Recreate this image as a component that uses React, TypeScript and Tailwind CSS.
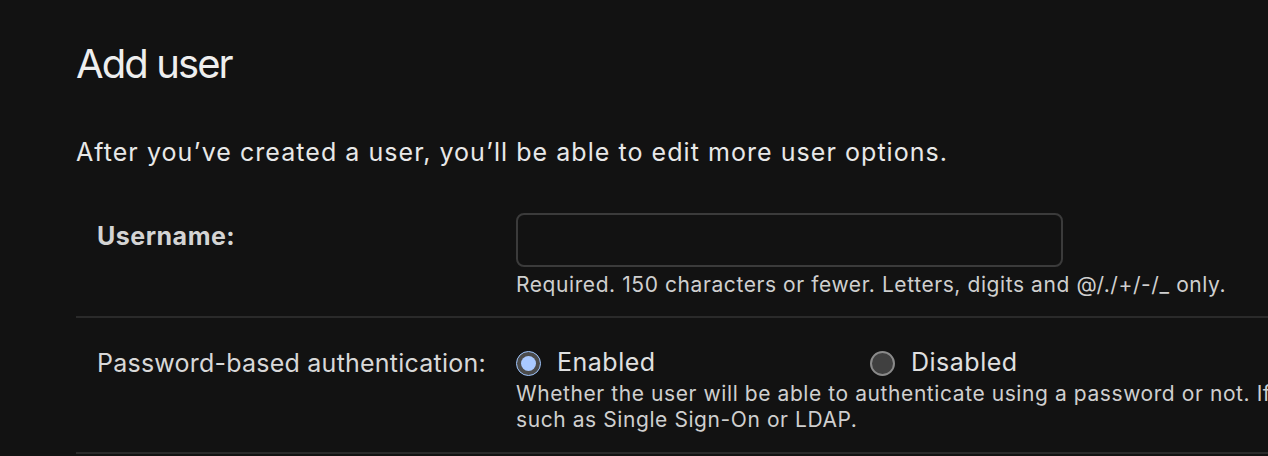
import React from 'react';

function Radio({ checked }: { checked: boolean }) {
  return checked ? (
    <span className="w-[25px] h-[25px] rounded-full border-[1.5px] border-[#9ec5fe] bg-[#4b4b4b] flex items-center justify-center shrink-0">
      <span className="w-[15px] h-[15px] rounded-full bg-[#a9c9ff]" />
    </span>
  ) : (
    <span className="w-[25px] h-[25px] rounded-full border-2 border-[#8a8a8a] bg-[#404040] shrink-0" />
  );
}

export default function App() {
  return (
    <div className="w-[1268px] h-[456px] overflow-hidden bg-[#121212] text-[#e6e6e6] font-['Inter',sans-serif]">
      <div className="pl-[76px] pt-[38px] w-[1600px]">
        <h1 className="text-[40px] leading-[52px] font-normal text-[#eeeeee] tracking-[-1.9px]">Add user</h1>
        <p className="mt-[45px] text-[25px] leading-[34px] text-[#e8e8e8] tracking-[1.05px]">
          After you’ve created a user, you’ll be able to edit more user options.
        </p>

        <div className="mt-[44px] flex border-b-2 border-[#2a2a2a] pb-[18px]">
          <label className="w-[440px] shrink-0 pl-[21px] pt-[8px] text-[25px] leading-[30px] font-bold text-[#d4d4d4] tracking-[0.5px]">
            Username:
          </label>
          <div>
            <input
              type="text"
              className="block w-[547px] h-[54px] rounded-[8px] border-2 border-[#3b3b3b] bg-[#121212] outline-none"
            />
            <div className="mt-[5px] text-[21px] leading-[26px] text-[#cfcfcf] tracking-[0.58px] whitespace-nowrap">
              Required. 150 characters or fewer. Letters, digits and @/./+/-/_ only.
            </div>
          </div>
        </div>

        <div className="flex border-b-2 border-[#2a2a2a] pt-[30px] pb-[19px]">
          <label className="w-[440px] shrink-0 pl-[21px] text-[25px] leading-[30px] text-[#d8d8d8] tracking-[0.23px] whitespace-nowrap">
            Password-based authentication:
          </label>
          <div>
            <div className="flex items-center h-[30px] text-[25px] text-[#e0e0e0] tracking-[0.5px]">
              <div className="flex items-center gap-[16px] w-[354px]">
                <Radio checked />
                <span>Enabled</span>
              </div>
              <div className="flex items-center gap-[16px]">
                <Radio checked={false} />
                <span>Disabled</span>
              </div>
            </div>
            <div className="mt-[3px] text-[21px] leading-[26px] text-[#cfcfcf] tracking-[0.58px] whitespace-nowrap">
              Whether the user will be able to authenticate using a password or not. If disabled, they may still be able to authenticate using other backends,
              <br />
              such as Single Sign-On or LDAP.
            </div>
          </div>
        </div>
      </div>
    </div>
  );
}
